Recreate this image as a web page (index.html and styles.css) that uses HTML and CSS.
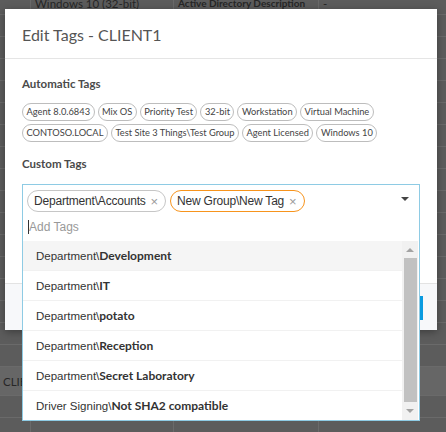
FILE: index.html
```html
<!DOCTYPE html>
<html>
<head>
<meta charset="utf-8">
<link rel="stylesheet" href="styles.css">
</head>
<body>
<div class="backdrop">
  <div class="row first"><div class="c c0"></div><div class="c c1">Windows 10 (32-bit)</div><div class="c c2 b">Active Directory Description</div><div class="c c3">-</div></div>
  <div class="row"><div class="c c0"></div><div class="c c1"></div><div class="c c2"></div><div class="c c3"></div></div>
  <div class="row"><div class="c c0"></div><div class="c c1"></div><div class="c c2"></div><div class="c c3"></div></div>
  <div class="row"><div class="c c0"></div><div class="c c1"></div><div class="c c2"></div><div class="c c3"></div></div>
  <div class="row"><div class="c c0"></div><div class="c c1"></div><div class="c c2"></div><div class="c c3"></div></div>
  <div class="row"><div class="c c0"></div><div class="c c1"></div><div class="c c2"></div><div class="c c3"></div></div>
  <div class="row"><div class="c c0"></div><div class="c c1"></div><div class="c c2"></div><div class="c c3"></div></div>
  <div class="row"><div class="c c0"></div><div class="c c1"></div><div class="c c2"></div><div class="c c3"></div></div>
  <div class="row"><div class="c c0"></div><div class="c c1"></div><div class="c c2"></div><div class="c c3"></div></div>
  <div class="row"><div class="c c0"></div><div class="c c1"></div><div class="c c2"></div><div class="c c3"></div></div>
  <div class="row"><div class="c c0"></div><div class="c c1"></div><div class="c c2"></div><div class="c c3"></div></div>
  <div class="row"><div class="c c0"></div><div class="c c1"></div><div class="c c2"></div><div class="c c3"></div></div>
  <div class="row"><div class="c c0"></div><div class="c c1"></div><div class="c c2"></div><div class="c c3"></div></div>
  <div class="row"><div class="c c0"></div><div class="c c1"></div><div class="c c2"></div><div class="c c3"></div></div>
  <div class="row"><div class="c c0"></div><div class="c c1"></div><div class="c c2"></div><div class="c c3"></div></div>
  <div class="row"><div class="c c0"></div><div class="c c1"></div><div class="c c2"></div><div class="c c3"></div></div>
  <div class="row"><div class="c c0"></div><div class="c c1"></div><div class="c c2"></div><div class="c c3"></div></div>
  <div class="row sel"><div class="c c0">CLIE</div><div class="c c1"></div><div class="c c2"></div><div class="c c3"></div></div>
  <div class="row"><div class="c c0"></div><div class="c c1"></div><div class="c c2"></div><div class="c c3"></div></div>
  <div class="row"><div class="c c0"></div><div class="c c1"></div><div class="c c2"></div><div class="c c3"></div></div>
</div>

<div class="modal">
  <div class="modal-header">Edit Tags - CLIENT1</div>
  <div class="modal-body">
    <div class="label label-auto">Automatic Tags</div>
    <div class="auto-tags">
      <span class="atag">Agent 8.0.6843</span>
      <span class="atag">Mix OS</span>
      <span class="atag">Priority Test</span>
      <span class="atag">32-bit</span>
      <span class="atag">Workstation</span>
      <span class="atag">Virtual Machine</span>
      <span class="atag">CONTOSO.LOCAL</span>
      <span class="atag">Test Site 3 Things\Test Group</span>
      <span class="atag">Agent Licensed</span>
      <span class="atag">Windows 10</span>
    </div>
    <div class="label label-custom">Custom Tags</div>
    <div class="select">
      <div class="chips">
        <span class="chip">Department\Accounts<span class="x">×</span></span>
        <span class="chip chip-new">New Group\New Tag<span class="x">×</span></span>
      </div>
      <span class="caret"></span>
      <div class="input-line"><span class="cursor"></span><span class="placeholder">Add Tags</span></div>
      <div class="dropdown">
        <div class="options">
          <div class="opt hover">Department\<b>Development</b></div>
          <div class="opt">Department\<b>IT</b></div>
          <div class="opt">Department\<b>potato</b></div>
          <div class="opt">Department\<b>Reception</b></div>
          <div class="opt">Department\<b>Secret Laboratory</b></div>
          <div class="opt">Driver Signing\<b>Not SHA2 compatible</b></div>
        </div>
        <div class="scrollbar">
          <span class="arrow up"></span>
          <span class="thumb"></span>
          <span class="arrow down"></span>
        </div>
      </div>
    </div>
  </div>
  <div class="modal-footer"><span class="btn"></span></div>
</div>
</body>
</html>
```
FILE: styles.css
```css
html, body {
  margin: 0;
  padding: 0;
}
body {
  width: 446px;
  height: 432px;
  overflow: hidden;
  background: #5c5c5c;
  font-family: "Liberation Sans", Arial, sans-serif;
  position: relative;
}
.backdrop {
  display: flex;
  flex-direction: column;
}
.row {
  display: flex;
  height: 21px;
  border-bottom: 1px solid #6a6a6a;
  font-family: Lato, sans-serif;
  font-size: 11.5px;
  color: #262626;
  line-height: 21px;
}
.row.first {
  margin-top: -7px;
}
.row.sel {
  background: #666666;
  height: 28px;
  line-height: 30px;
}
.c {
  border-right: 1px solid #6a6a6a;
  white-space: nowrap;
  overflow: hidden;
  padding-left: 4px;
}
.c0 { width: 27px; padding-left: 3px; }
.c1 { width: 138px; }
.c2 { width: 140px; }
.c3 { flex: 1; border-right: none; }
.b { font-weight: 700; font-size: 10px; }

.modal {
  position: absolute;
  top: 9px;
  left: 5px;
  width: 432px;
  height: 321px;
  background: #fff;
  box-shadow: 0 2px 8px rgba(0,0,0,0.35);
  display: flex;
  flex-direction: column;
}
.modal-header {
  height: 49px;
  border-bottom: 1px solid #e5e5e5;
  padding-left: 17px;
  font-family: Lato, sans-serif;
  font-size: 16px;
  color: #555;
  line-height: 52px;
}
.modal-body {
  flex: 1;
  padding: 0 17px;
  position: relative;
  z-index: 2;
}
.label {
  font-family: Lato, sans-serif;
  font-weight: 700;
  font-size: 11.5px;
  color: #4a4a4a;
  line-height: 16px;
}
.label-auto { margin-top: 17px; }
.label-custom { margin-top: 14px; }
.auto-tags {
  margin-top: 11px;
  display: flex;
  flex-wrap: wrap;
  gap: 3px;
  width: 360px;
}
.atag {
  font-family: Lato, sans-serif;
  font-size: 9.3px;
  color: #444;
  height: 16px;
  line-height: 16px;
  border: 1px solid #bdbdbd;
  border-radius: 9px;
  padding: 0 3.5px;
  white-space: nowrap;
}
.select {
  margin-top: 12px;
  position: relative;
  border: 1px solid #8ecbe4;
  border-bottom: none;
  height: 56px;
}
.chips {
  display: flex;
  gap: 4px;
  padding: 5px 0 0 4px;
}
.chip {
  display: flex;
  align-items: center;
  height: 20px;
  border: 1px solid #c6c6c6;
  border-radius: 11px;
  padding: 0 7px 0 6px;
  font-size: 12px;
  letter-spacing: -0.2px;
  color: #333;
}
.chip-new {
  border-color: #f7941d;
}
.x {
  color: #9a9a9a;
  font-size: 13px;
  margin-left: 5px;
}
.caret {
  position: absolute;
  right: 10px;
  top: 12px;
  width: 0;
  height: 0;
  border-left: 4px solid transparent;
  border-right: 4px solid transparent;
  border-top: 4px solid #444;
}
.input-line {
  display: flex;
  align-items: center;
  height: 22px;
  margin-top: 4px;
  padding-left: 5px;
}
.cursor {
  width: 1px;
  height: 14px;
  background: #333;
}
.placeholder {
  font-size: 12px;
  color: #999;
}
.dropdown {
  position: absolute;
  top: 56px;
  left: -1px;
  right: -1px;
  height: 179px;
  border: 1px solid #8ecbe4;
  border-top: none;
  background: #fff;
  display: flex;
  z-index: 5;
}
.options {
  flex: 1;
  display: flex;
  flex-direction: column;
}
.opt {
  height: 29px;
  border-bottom: 1px solid #f1f1f1;
  padding-left: 13px;
  font-size: 11.5px;
  line-height: 30px;
  color: #333;
  white-space: nowrap;
}
.opt:last-child { border-bottom: none; }
.opt.hover { background: #f5f5f5; }
.opt b {
  font-family: Lato, sans-serif;
  font-weight: 700;
  font-size: 12px;
}
.scrollbar {
  width: 16px;
  margin-right: 1px;
  background: #f1f1f1;
  display: flex;
  flex-direction: column;
  align-items: center;
}
.arrow {
  width: 0;
  height: 0;
  border-left: 4px solid transparent;
  border-right: 4px solid transparent;
}
.arrow.up {
  border-bottom: 4px solid #a3a3a3;
  margin-top: 7px;
}
.arrow.down {
  border-top: 4px solid #a3a3a3;
  margin-top: 7px;
}
.thumb {
  width: 13px;
  height: 144px;
  background: #c1c1c1;
  margin-top: 6px;
}
.modal-footer {
  height: 46px;
  border-top: 1px solid #e3e3e3;
  background: #f7f8fa;
  position: relative;
}
.btn {
  position: absolute;
  right: 14px;
  top: 12px;
  width: 30px;
  height: 24px;
  background: #0a9be0;
}
```
